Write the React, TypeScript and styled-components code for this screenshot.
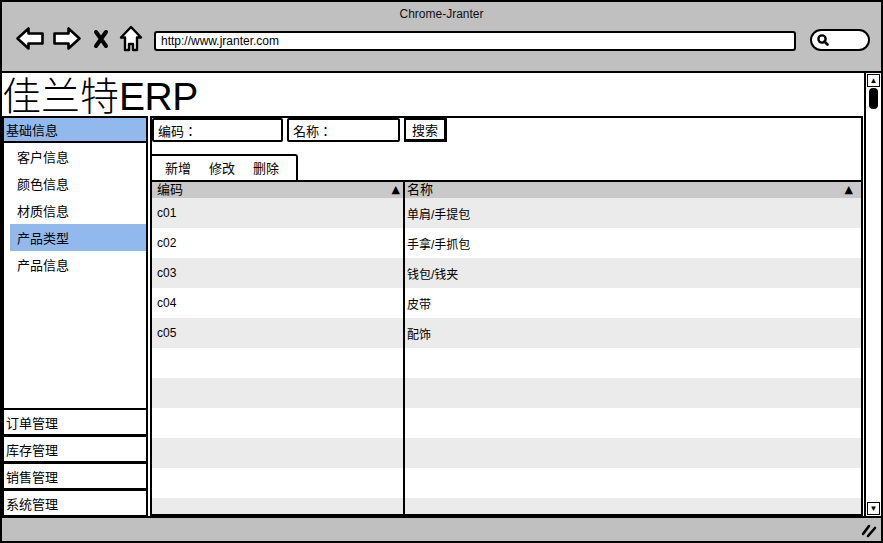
import { FC } from 'react';
import styled, { createGlobalStyle } from 'styled-components';

const GlobalStyle = createGlobalStyle`
  html, body {
    margin: 0;
    padding: 0;
    background: #ffffff;
  }
  body {
    font-family: 'Liberation Sans', 'Noto Sans CJK SC', sans-serif;
    color: #000000;
  }
  * {
    box-sizing: border-box;
  }
`;

interface RowI {
  code: string;
  name: string;
}

const rows: RowI[] = [
  { code: 'c01', name: '单肩/手提包' },
  { code: 'c02', name: '手拿/手抓包' },
  { code: 'c03', name: '钱包/钱夹' },
  { code: 'c04', name: '皮带' },
  { code: 'c05', name: '配饰' },
  { code: '', name: '' },
  { code: '', name: '' },
  { code: '', name: '' },
  { code: '', name: '' },
  { code: '', name: '' },
  { code: '', name: '' }
];

const subItems = ['客户信息', '颜色信息', '材质信息', '产品类型', '产品信息'];
const otherGroups = ['订单管理', '库存管理', '销售管理', '系统管理'];

const BackIcon: FC<{ flip?: boolean }> = ({ flip }) => (
  <svg width="30" height="25" viewBox="0 0 30 25" style={flip ? { transform: 'scaleX(-1)' } : undefined}>
    <path
      d="M2.5 12.5 L13.5 2.5 L13.5 7.5 L27.5 7.5 L27.5 17.5 L13.5 17.5 L13.5 22.5 Z"
      fill="#ffffff"
      stroke="#000000"
      strokeWidth="2.6"
      strokeLinejoin="round"
    />
  </svg>
);

const CloseIcon: FC = () => (
  <svg width="16" height="20" viewBox="0 0 16 20">
    <path d="M3 3 L13 17 M13 3 L3 17" stroke="#000000" strokeWidth="4" strokeLinecap="round" />
  </svg>
);

const HomeIcon: FC = () => (
  <svg width="24" height="27" viewBox="0 0 24 27">
    <path
      d="M12 2 L22 12.5 L18 12.5 L18 25 L14 25 L14 19 L10 19 L10 25 L6 25 L6 12.5 L2 12.5 Z"
      fill="#ffffff"
      stroke="#000000"
      strokeWidth="2.4"
      strokeLinejoin="round"
    />
  </svg>
);

const MagnifierIcon: FC = () => (
  <svg width="14" height="14" viewBox="0 0 14 14">
    <circle cx="6" cy="6" r="3.6" fill="none" stroke="#000000" strokeWidth="2.4" />
    <path d="M8.5 8.5 L11.5 11.5" stroke="#000000" strokeWidth="2.6" strokeLinecap="round" />
  </svg>
);

const GripIcon: FC = () => (
  <svg width="16" height="16" viewBox="0 0 16 16">
    <path d="M2 12 L8 4 M7 14 L14 6" stroke="#000000" strokeWidth="2.6" strokeLinecap="round" />
  </svg>
);

const App: FC = () => {
  return (
    <>
      <GlobalStyle />
      <Window>
        <TitleBar>
          <WindowTitle>Chrome-Jranter</WindowTitle>
          <NavRow>
            <BackIcon />
            <BackIcon flip />
            <CloseIcon />
            <HomeIcon />
            <UrlBar>http://www.jranter.com</UrlBar>
            <SearchPill>
              <MagnifierIcon />
            </SearchPill>
          </NavRow>
        </TitleBar>

        <Content>
          <Main>
            <Heading>
              <HeadingCjk>佳兰特</HeadingCjk>ERP
            </Heading>
            <Body>
              <Sidebar>
                <GroupHeader $active>基础信息</GroupHeader>
                <GroupBody>
                  {subItems.map((item) => (
                    <SubItem key={item} $selected={item === '产品类型'}>
                      {item}
                    </SubItem>
                  ))}
                </GroupBody>
                {otherGroups.map((group) => (
                  <GroupHeader key={group}>{group}</GroupHeader>
                ))}
              </Sidebar>

              <Panel>
                <SearchRow>
                  <Field $width={131}>编码：</Field>
                  <Field $width={113}>名称：</Field>
                  <SearchButton>搜索</SearchButton>
                </SearchRow>
                <Toolbar>
                  <ToolButton>新增</ToolButton>
                  <ToolButton>修改</ToolButton>
                  <ToolButton>删除</ToolButton>
                </Toolbar>
                <Grid>
                  <HeaderRow>
                    <HeaderCell $first>
                      编码
                      <SortMark>▲</SortMark>
                    </HeaderCell>
                    <HeaderCell>
                      名称
                      <SortMark>▲</SortMark>
                    </HeaderCell>
                  </HeaderRow>
                  {rows.map((row, i) => (
                    <DataRow key={i} $odd={i % 2 === 0}>
                      <DataCell $first>{row.code}</DataCell>
                      <DataCell>{row.name}</DataCell>
                    </DataRow>
                  ))}
                </Grid>
              </Panel>
            </Body>
          </Main>

          <Scrollbar>
            <ArrowBox>▲</ArrowBox>
            <Thumb />
            <Track />
            <ArrowBox>▼</ArrowBox>
          </Scrollbar>
        </Content>

        <StatusBar>
          <GripIcon />
        </StatusBar>
      </Window>
    </>
  );
};

const Window = styled.div`
  width: 883px;
  height: 543px;
  display: flex;
  flex-direction: column;
  border: 2px solid #000000;
  background-color: #c0c0c0;
  overflow: hidden;
`;

const TitleBar = styled.div`
  height: 71px;
  flex-shrink: 0;
  display: flex;
  flex-direction: column;
  background-color: #c0c0c0;
  border-bottom: 2px solid #000000;
`;

const WindowTitle = styled.div`
  padding-top: 5px;
  text-align: center;
  font-size: 12px;
  line-height: 14px;
  color: #111111;
`;

const NavRow = styled.div`
  display: flex;
  align-items: center;
  gap: 8px;
  margin-top: 4px;
  padding-left: 13px;

  & > svg:nth-child(2) {
    margin-left: -1px;
  }
  & > svg:nth-child(3) {
    margin-left: 3px;
  }
  & > svg:nth-child(4) {
    margin-left: 2px;
  }
`;

const UrlBar = styled.div`
  width: 642px;
  height: 20px;
  margin-left: 3px;
  margin-top: 4px;
  padding-left: 5px;
  display: flex;
  align-items: center;
  background-color: #ffffff;
  border: 2px solid #000000;
  border-radius: 3px;
  font-size: 12px;
  color: #000000;
`;

const SearchPill = styled.div`
  width: 60px;
  height: 22px;
  margin-left: 6px;
  margin-top: 2px;
  padding-left: 4px;
  display: flex;
  align-items: center;
  background-color: #ffffff;
  border: 2px solid #000000;
  border-radius: 11px;
`;

const Content = styled.div`
  flex: 1;
  min-height: 0;
  display: flex;
  background-color: #ffffff;
`;

const Main = styled.div`
  flex: 1;
  display: flex;
  flex-direction: column;
  padding-right: 1px;
`;

const Heading = styled.div`
  height: 43px;
  flex-shrink: 0;
  font-size: 39px;
  line-height: 40px;
  color: #000000;
  white-space: nowrap;
  letter-spacing: -0.5px;
`;

const HeadingCjk = styled.span`
  font-family: 'Noto Sans CJK SC', sans-serif;
  font-weight: 300;
  letter-spacing: 0;
`;

const Body = styled.div`
  flex: 1;
  min-height: 0;
  display: flex;
`;

const Sidebar = styled.div`
  width: 146px;
  flex-shrink: 0;
  display: flex;
  flex-direction: column;
`;

const GroupHeader = styled.div<{ $active?: boolean }>`
  height: 27px;
  flex-shrink: 0;
  display: flex;
  align-items: center;
  padding-left: 2px;
  background-color: ${({ $active }) => ($active ? '#92b9ee' : '#ffffff')};
  border: 2px solid #000000;
  border-bottom-width: ${({ $active }) => ($active ? '2px' : '1px')};
  font-size: 13px;
  color: #000000;
`;

const GroupBody = styled.div`
  flex: 1;
  display: flex;
  flex-direction: column;
  border-left: 2px solid #000000;
  border-right: 2px solid #000000;
`;

const SubItem = styled.div<{ $selected?: boolean }>`
  height: 27px;
  display: flex;
  align-items: center;
  margin-left: 6px;
  padding-left: 7px;
  background-color: ${({ $selected }) => ($selected ? '#92b9ee' : 'transparent')};
  font-size: 13px;
  color: #000000;
`;

const Panel = styled.div`
  flex: 1;
  min-width: 0;
  display: flex;
  flex-direction: column;
  margin-left: 2px;
  border: 2px solid #000000;
`;

const SearchRow = styled.div`
  display: flex;
  gap: 4px;
`;

const Field = styled.div<{ $width: number }>`
  width: ${({ $width }) => $width}px;
  height: 24px;
  display: flex;
  align-items: center;
  padding-left: 4px;
  border: 2px solid #000000;
  border-radius: 2px;
  background-color: #ffffff;
  font-family: 'Liberation Sans', 'Noto Sans CJK JP', sans-serif;
  font-size: 13px;
`;

const SearchButton = styled.div`
  width: 43px;
  height: 24px;
  display: flex;
  align-items: center;
  justify-content: center;
  border: 2px solid #000000;
  border-right-width: 3px;
  border-bottom-width: 3px;
  background-color: #ffffff;
  font-size: 13px;
`;

const Toolbar = styled.div`
  width: 146px;
  height: 26px;
  margin-top: 12px;
  display: flex;
  align-items: flex-end;
  gap: 18px;
  padding: 0 0 3px 13px;
  border: 2px solid #000000;
  border-left: none;
  border-bottom: none;
  border-radius: 0 3px 0 0;
`;

const ToolButton = styled.span`
  font-size: 13px;
  line-height: 16px;
  color: #000000;
`;

const Grid = styled.div`
  flex: 1;
  min-height: 0;
  overflow: hidden;
  border-top: 2px solid #000000;
`;

const HeaderRow = styled.div`
  display: grid;
  grid-template-columns: 253px 1fr;
  height: 16px;
  background-color: #c9c9c9;
`;

const HeaderCell = styled.div<{ $first?: boolean }>`
  display: flex;
  align-items: center;
  justify-content: space-between;
  padding: ${({ $first }) => ($first ? '0 3px 0 5px' : '0 8px 0 2px')};
  border-right: ${({ $first }) => ($first ? '2px solid #000000' : 'none')};
  font-size: 13px;
  line-height: 16px;
`;

const SortMark = styled.span`
  font-family: 'DejaVu Sans', sans-serif;
  font-size: 11px;
  line-height: 12px;
  color: #000000;
`;

const DataRow = styled.div<{ $odd: boolean }>`
  display: grid;
  grid-template-columns: 253px 1fr;
  height: 30px;
  background-color: ${({ $odd }) => ($odd ? '#ebebeb' : '#ffffff')};
`;

const DataCell = styled.div<{ $first?: boolean }>`
  display: flex;
  align-items: center;
  padding-left: ${({ $first }) => ($first ? '5px' : '2px')};
  border-right: ${({ $first }) => ($first ? '2px solid #000000' : 'none')};
  font-size: 12px;
  color: #000000;
`;

const Scrollbar = styled.div`
  width: 17px;
  flex-shrink: 0;
  display: flex;
  flex-direction: column;
  align-items: center;
  padding: 1px 0;
  border-left: 2px solid #000000;
  background-color: #ffffff;
`;

const ArrowBox = styled.div`
  width: 13px;
  height: 13px;
  flex-shrink: 0;
  display: flex;
  align-items: center;
  justify-content: center;
  border: 1px solid #000000;
  font-size: 8px;
  line-height: 8px;
`;

const Thumb = styled.div`
  width: 9px;
  height: 21px;
  margin-top: 1px;
  flex-shrink: 0;
  background-color: #000000;
  border-radius: 4px;
`;

const Track = styled.div`
  flex: 1;
`;

const StatusBar = styled.div`
  height: 25px;
  flex-shrink: 0;
  display: flex;
  align-items: center;
  justify-content: flex-end;
  padding-right: 4px;
  background-color: #c0c0c0;
  border-top: 2px solid #000000;
`;

export default App;
